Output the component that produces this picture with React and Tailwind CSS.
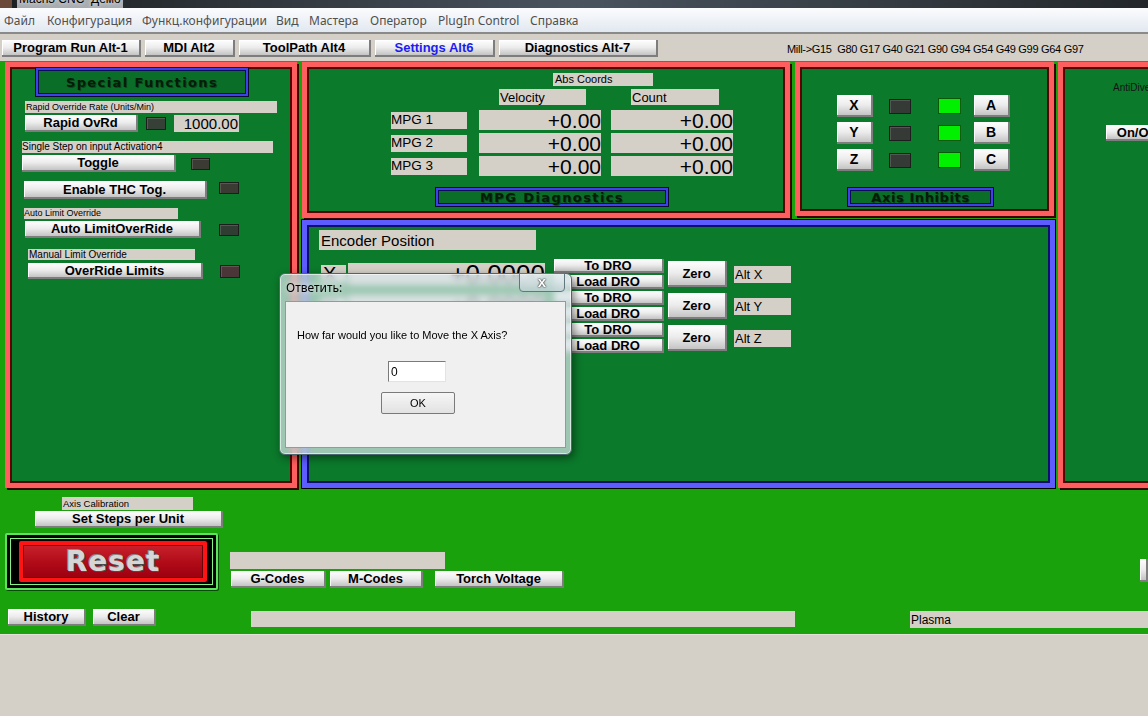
import React from 'react';

const Btn = ({ className = '', children }) => (
  <div
    className={`flex items-center justify-center shrink-0 font-bold text-black leading-none whitespace-nowrap overflow-hidden bg-linear-to-b from-white via-[#ececec] to-[#c4c4c4] border-r-2 border-b-2 border-[#7d7d7d] shadow-[inset_1px_1px_0_#ffffff] ${className}`}
  >
    {children}
  </div>
);

const Lbl = ({ className = '', children }) => (
  <div className={`flex items-center shrink-0 bg-[#d4d0c8] text-black leading-none whitespace-nowrap overflow-hidden ${className}`}>
    {children}
  </div>
);

const Led = ({ className = '' }) => (
  <div className={`shrink-0 border border-[#1d1d1d] shadow-[inset_1px_1px_0_rgba(255,255,255,0.15)] ${className}`} />
);

// dark green caption box with blue bevel
const Caption = ({ className = '', children }) => (
  <div
    className={`flex items-center justify-center shrink-0 bg-[#0b6e28] border-2 border-[#4040e8] shadow-[inset_0_0_0_1px_#0c0c58,0_0_0_1px_#0a0a30] text-[#061c0a] font-bold leading-none whitespace-nowrap font-['DejaVu_Sans',sans-serif] [text-shadow:1px_1px_0_#0a4a1a] ${className}`}
  >
    {children}
  </div>
);

const RedPanel = ({ className = '', children }) => (
  <div
    className={`shrink-0 bg-[#0b7a2b] border-[5px] border-[#ff5e5e] shadow-[inset_0_0_0_2px_#560505,2px_2px_0_#3a0000] overflow-hidden ${className}`}
  >
    {children}
  </div>
);

const BluePanel = ({ className = '', children }) => (
  <div
    className={`shrink-0 bg-[#0b7a2b] border-[5px] border-[#5c5cff] shadow-[inset_0_0_0_2px_#10106a,0_0_0_1px_#000000] overflow-hidden ${className}`}
  >
    {children}
  </div>
);

export default function App() {
  const menu = [
    ['Файл', 'w-[43px]'],
    ['Конфигурация', 'w-[95px]'],
    ['Функц.конфигурации', 'w-[134px]'],
    ['Вид', 'w-[33px]'],
    ['Мастера', 'w-[61px]'],
    ['Оператор', 'w-[68px]'],
    ['PlugIn Control', 'w-[92px]'],
    ['Справка', 'w-[80px]'],
  ];

  const tabs = [
    ['Program Run Alt-1', 'w-[139px]', false],
    ['MDI Alt2', 'w-[90px]', false],
    ['ToolPath Alt4', 'w-[132px]', false],
    ['Settings Alt6', 'w-[120px]', true],
    ['Diagnostics Alt-7', 'w-[159px]', false],
  ];

  return (
    <div className="relative w-[1148px] h-[716px] overflow-hidden flex flex-col bg-[#d4d0c8] font-['Liberation_Sans',Arial,sans-serif]">
      {/* window title (cut off at top) */}
      <div className="h-[8px] shrink-0 overflow-hidden bg-linear-to-r from-[#1c1f22] via-[#4a5560] to-[#23272b] flex">
        <div className="w-[12px] h-[8px] bg-[#6b4a3a]" />
        <div className="ml-[5px] -mt-[8px] px-[2px] text-[12px] leading-[15px] text-black bg-[#c9ced2]/80 [text-shadow:0_0_4px_#fff]">
          Mach3 CNC&nbsp;&nbsp;Демо
        </div>
      </div>

      {/* menu bar */}
      <div className="h-[26px] shrink-0 flex items-center pt-[2px] pl-[4px] bg-linear-to-b from-[#fbfcfe] to-[#e2e8f0] border-b-2 border-[#8a8a8a] text-[12px] text-[#505050] font-['Noto_Sans',sans-serif]">
        {menu.map(([t, w]) => (
          <div key={t} className={`${w} shrink-0 whitespace-nowrap`}>{t}</div>
        ))}
      </div>

      {/* tab buttons */}
      <div className="h-[27px] shrink-0 flex items-start pt-[6px] pl-[2px]">
        <div className="flex gap-[4px]">
          {tabs.map(([t, w, active]) => (
            <Btn key={t} className={`${w} h-[17px] text-[13px]`}>
              <span className={active ? 'text-[#1c1cf0]' : ''}>{t}</span>
            </Btn>
          ))}
        </div>
        <div className="ml-[129px] mt-[3px] text-[11px] leading-[13px] text-black whitespace-nowrap tracking-[-0.3px]">
          Mill-&gt;G15&nbsp;&nbsp;G80 G17 G40 G21 G90 G94 G54 G49 G99 G64 G97
        </div>
      </div>

      {/* main green screen */}
      <div className="h-[573px] shrink-0 bg-[#19a20b] flex flex-col pt-[1px]">
        <div className="flex items-start h-[426px]">
          {/* Special functions */}
          <RedPanel className="ml-[5px] w-[292px] h-[426px] flex flex-col items-start">
            <Caption className="ml-[26px] mt-[1px] w-[212px] h-[28px] text-[13px] tracking-[1.4px]">Special Functions</Caption>
            <Lbl className="ml-[15px] mt-[5px] w-[252px] h-[12px] text-[9px] pl-[1px]">Rapid Override Rate (Units/Min)</Lbl>
            <div className="flex items-center mt-[2px] h-[17px]">
              <Btn className="ml-[15px] w-[113px] h-[17px] text-[13px]">Rapid OvRd</Btn>
              <Led className="ml-[8px] w-[20px] h-[13px] bg-[#364036]" />
              <Lbl className="ml-[8px] w-[65px] h-[17px] text-[15px] justify-end pr-[1px]">1000.00</Lbl>
            </div>
            <Lbl className="ml-[12px] mt-[9px] w-[251px] h-[12px] text-[10px]">Single Step on input Activation4</Lbl>
            <div className="flex items-center mt-[2px] h-[17px]">
              <Btn className="ml-[12px] w-[154px] h-[17px] text-[13px]">Toggle</Btn>
              <Led className="ml-[15px] w-[19px] h-[12px] bg-[#3b3b34]" />
            </div>
            <div className="flex items-start mt-[9px] h-[18px]">
              <Btn className="ml-[14px] w-[183px] h-[18px] text-[13px]">Enable THC Tog.</Btn>
              <Led className="ml-[12px] mt-[1px] w-[20px] h-[12px] bg-[#3b3b34]" />
            </div>
            <Lbl className="ml-[14px] mt-[9px] w-[154px] h-[11px] text-[9px]">Auto Limit Override</Lbl>
            <div className="flex items-center mt-[2px] h-[17px]">
              <Btn className="ml-[15px] w-[176px] h-[17px] text-[13px]">Auto LimitOverRide</Btn>
              <Led className="ml-[18px] w-[20px] h-[12px] bg-[#2f3d33]" />
            </div>
            <Lbl className="ml-[18px] mt-[11px] w-[167px] h-[11px] text-[10px] pl-[1px]">Manual Limit Override</Lbl>
            <div className="flex items-center mt-[3px] h-[16px]">
              <Btn className="ml-[18px] w-[175px] h-[16px] text-[13px]">OverRide Limits</Btn>
              <Led className="ml-[17px] w-[20px] h-[13px] bg-[#4b3538]" />
            </div>
          </RedPanel>

          {/* middle column */}
          <div className="ml-[5px] flex flex-col">
            <div className="flex items-start">
              {/* MPG */}
              <RedPanel className="w-[488px] h-[156px] flex flex-col items-start">
                <Lbl className="ml-[246px] mt-[6px] w-[100px] h-[13px] text-[11px] pl-[2px]">Abs Coords</Lbl>
                <div className="flex mt-[3px] h-[16px]">
                  <Lbl className="ml-[192px] w-[87px] h-[16px] text-[13px] pl-[1px]">Velocity</Lbl>
                  <Lbl className="ml-[45px] w-[88px] h-[16px] text-[13px] pl-[1px]">Count</Lbl>
                </div>
                <div className="mt-[5px] flex flex-col gap-[3px]">
                  {['MPG 1', 'MPG 2', 'MPG 3'].map((m) => (
                    <div key={m} className="flex items-center h-[20px]">
                      <Lbl className="ml-[84px] w-[76px] h-[17px] text-[13.5px]">{m}</Lbl>
                      <Lbl className="ml-[12px] w-[122px] h-[20px] text-[21px] justify-end">+0.00</Lbl>
                      <Lbl className="ml-[10px] w-[122px] h-[20px] text-[21px] justify-end">+0.00</Lbl>
                    </div>
                  ))}
                </div>
                <Caption className="ml-[129px] mt-[12px] w-[232px] h-[18px] text-[13px] tracking-[1.4px]">MPG Diagnostics</Caption>
              </RedPanel>

              {/* Axis inhibits */}
              <RedPanel className="ml-[5px] w-[259px] h-[154px] flex flex-col items-start">
                {[['X', 'A'], ['Y', 'B'], ['Z', 'C']].map(([l, r], i) => (
                  <div key={l} className={`flex items-center h-[22px] ${i === 0 ? 'mt-[28px]' : 'mt-[5px]'}`}>
                    <Btn className="ml-[37px] w-[36px] h-[22px] text-[14px]">{l}</Btn>
                    <Led className="ml-[16px] w-[22px] h-[15px] bg-[#363a37]" />
                    <div className="ml-[27px] w-[23px] h-[16px] bg-[#00f000] border border-[#0a5a0a]" />
                    <Btn className="ml-[13px] w-[36px] h-[22px] text-[14px]">{r}</Btn>
                  </div>
                ))}
                <Caption className="ml-[48px] mt-[17px] w-[145px] h-[18px] text-[13px] tracking-[0.6px]">Axis Inhibits</Caption>
              </RedPanel>
            </div>

            {/* Encoder position */}
            <BluePanel className="mt-[2px] w-[753px] h-[268px] flex flex-col items-start">
              <Lbl className="ml-[12px] mt-[5px] w-[217px] h-[20px] text-[15px] pl-[2px]">Encoder Position</Lbl>
              <div className="mt-[9px] flex flex-col gap-[2px]">
                {[['X', 'Alt X'], ['Y', 'Alt Y'], ['Z', 'Alt Z']].map(([a, alt]) => (
                  <div key={a} className="flex items-center ml-[14px] h-[30px]">
                    <Lbl className="w-[25px] h-[18px] text-[20px] pl-[2px]">{a}</Lbl>
                    <Lbl className="ml-[2px] w-[197px] h-[22px] text-[26px] justify-end">+0.0000</Lbl>
                    <div className="ml-[9px] flex flex-col gap-[2px]">
                      <Btn className="w-[110px] h-[14px] text-[13px]">To DRO</Btn>
                      <Btn className="w-[110px] h-[14px] text-[13px]">Load DRO</Btn>
                    </div>
                    <Btn className="ml-[4px] w-[59px] h-[26px] text-[13px]">Zero</Btn>
                    <Lbl className="ml-[7px] w-[57px] h-[17px] text-[13px] pl-[1px]">{alt}</Lbl>
                  </div>
                ))}
              </div>
            </BluePanel>
          </div>

          {/* right panel, cut by window edge */}
          <RedPanel className="ml-[3px] w-[120px] h-[426px] flex flex-col items-start">
            <div className="ml-[50px] mt-[15px] text-[10px] leading-[12px] text-[#151515] whitespace-nowrap">AntiDive</div>
            <Btn className="ml-[43px] mt-[31px] w-[64px] h-[16px] text-[13px]">On/Off</Btn>
          </RedPanel>
        </div>

        {/* lower green area */}
        <div className="flex flex-col pt-[9px]">
          <div className="flex items-end">
            <div className="flex flex-col items-start w-[223px] shrink-0">
              <Lbl className="ml-[62px] w-[131px] h-[13px] text-[9.5px] pl-[1px]">Axis Calibration</Lbl>
              <Btn className="ml-[35px] mt-[1px] w-[188px] h-[17px] text-[13px]">Set Steps per Unit</Btn>
              <div className="ml-[5px] mt-[5px] w-[213px] h-[57px] bg-black border-2 border-[#5ee35e] p-[3px] rounded-[2px] shadow-[1px_1px_0_#0a4a0a]">
                <div className="w-full h-full border border-[#86f286] bg-black flex items-center pl-[8px]">
                  <div className="w-[188px] h-[41px] border-[4px] border-[#ff1414] rounded-[2px] shadow-[inset_0_0_0_1px_#6a0008] bg-linear-to-b from-[#c8202c] via-[#b20c18] to-[#9c0010] flex items-center justify-center">
                    <span className="font-['DejaVu_Sans',sans-serif] font-bold text-[28px] leading-none tracking-[1px] text-[#d6d6d6] [text-shadow:1px_1px_0_#4a4a4a,-1px_-1px_0_#8a8a8a]">
                      Reset
                    </span>
                  </div>
                </div>
              </div>
            </div>
            <div className="ml-[7px] mb-[2px] flex flex-col items-start">
              <Lbl className="w-[215px] h-[17px]" />
              <div className="mt-[2px] flex items-center">
                <Btn className="ml-[1px] w-[95px] h-[17px] text-[13px]">G-Codes</Btn>
                <Btn className="ml-[4px] w-[93px] h-[17px] text-[13px]">M-Codes</Btn>
                <Btn className="ml-[12px] w-[129px] h-[17px] text-[13px]">Torch Voltage</Btn>
              </div>
            </div>
            <Btn className="ml-auto mb-[8px] w-[8px] h-[23px]" />
          </div>

          <div className="mt-[19px] flex items-start">
            <Btn className="ml-[8px] w-[78px] h-[17px] text-[13px]">History</Btn>
            <Btn className="ml-[7px] w-[63px] h-[17px] text-[13px]">Clear</Btn>
            <Lbl className="ml-[95px] mt-[2px] w-[544px] h-[16px]" />
            <Lbl className="ml-[115px] mt-[2px] flex-1 h-[17px] text-[12px] pl-[1px]">Plasma</Lbl>
          </div>
        </div>
      </div>

      {/* bottom gray */}
      <div className="flex-1 bg-[#d4d0c8] border-t border-[#e4e1da]" />

      {/* input dialog */}
      <div className="absolute left-[279px] top-[273px] w-[293px] h-[182px] flex flex-col rounded-[6px] border border-[#4d6670] bg-[#dce8ec]/70 backdrop-blur-[3px] shadow-[0_0_0_1px_rgba(255,255,255,0.6)_inset,2px_3px_8px_rgba(0,0,0,0.45)]">
        <div className="h-[27px] shrink-0 flex items-center pl-[6px] text-[12px] text-black font-['Noto_Sans',sans-serif] [text-shadow:0_0_6px_#ffffff]">
          Ответить:
        </div>
        <div className="absolute left-[239px] -top-[1px] w-[46px] h-[19px] rounded-b-[4px] border border-[#61777f] bg-linear-to-b from-[#e9f0f2]/70 to-[#c2d3d8]/70 flex items-center justify-center">
          <span className="text-[15px] font-bold leading-none text-white -mt-[2px] [text-shadow:0_0_2px_#222,0_0_1px_#222]">x</span>
        </div>
        <div className="mx-[5px] h-[147px] border border-[#8a9ca4] bg-[#f0f0f0] flex flex-col items-start">
          <div className="ml-[11px] mt-[27px] text-[11px] leading-[13px] text-black whitespace-nowrap">
            How far would you like to Move the X Axis?
          </div>
          <div className="ml-[102px] mt-[19px] w-[58px] h-[21px] bg-white border border-[#7a7a7a] border-b-[#e3e3e3] border-r-[#e3e3e3] flex items-center pl-[2px] text-[12px] leading-none text-black">
            0
          </div>
          <div className="ml-[95px] mt-[10px] w-[74px] h-[22px] border border-[#7a7a7a] rounded-[2px] bg-linear-to-b from-[#f6f6f6] to-[#e2e2e2] flex items-center justify-center text-[11px] leading-none text-black">
            OK
          </div>
        </div>
      </div>
    </div>
  );
}
